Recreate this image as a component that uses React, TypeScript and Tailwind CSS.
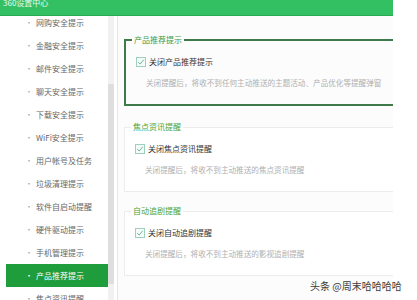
import React from "react";

const menu = [
  "网购安全提示",
  "金融安全提示",
  "邮件安全提示",
  "聊天安全提示",
  "下载安全提示",
  "WiFi安全提示",
  "用户帐号及任务",
  "垃圾清理提示",
  "软件自启动提醒",
  "硬件驱动提示",
  "手机管理提示",
  "产品推荐提示",
  "焦点资讯提醒",
];

type Panel = { title: string; label: string; desc: string; active?: boolean };

const panels: Panel[] = [
  {
    title: "产品推荐提示",
    label: "关闭产品推荐提示",
    desc: "关闭提醒后，将收不到任何主动推送的主题活动、产品优化等提醒弹窗",
    active: true,
  },
  {
    title: "焦点资讯提醒",
    label: "关闭焦点资讯提醒",
    desc: "关闭提醒后，将收不到主动推送的焦点资讯提醒",
  },
  {
    title: "自动追剧提醒",
    label: "关闭自动追剧提醒",
    desc: "关闭提醒后，将收不到主动推送的影视追剧提醒",
  },
];

const Check = () => (
  <span className="w-[10px] h-[10px] border border-[#9fd0bf] bg-[#f4fbf8] flex items-center justify-center shrink-0">
    <svg width="8" height="8" viewBox="0 0 8 8">
      <path d="M1.2 4.2 L3.2 6 L6.8 1.8" fill="none" stroke="#6fb7a0" strokeWidth="1" />
    </svg>
  </span>
);

export default function App() {
  return (
    <div
      className="w-[417px] h-[300px] bg-white overflow-hidden"
      style={{ fontFamily: '"Noto Sans CJK SC", "Noto Sans", sans-serif' }}
    >
      <div className="w-[393px] h-[300px] flex flex-col overflow-hidden">
        {/* title bar */}
        <div className="h-[17px] shrink-0 bg-[#33c063] border-b border-[#2aa955] px-[3px] text-[8px] leading-[8px] text-white/90 -mt-[1px]">
          360设置中心
        </div>

        <div className="flex flex-1 min-h-0">
          {/* sidebar */}
          <div className="w-[108px] shrink-0 bg-white overflow-hidden">
            <ul className="-mt-[5px] pl-[6px]">
              {menu.map((m, i) => {
                const on = m === "产品推荐提示";
                return (
                  <li
                    key={i}
                    className={`h-[23px] flex items-center text-[8px] ${
                      on ? "bg-[#1f9c3c] text-white" : "text-[#666]"
                    }`}
                  >
                    <span className={`w-[30px] pl-[19px] ${on ? "text-white" : "text-[#aaa]"}`}>·</span>
                    <span>{m}</span>
                  </li>
                );
              })}
            </ul>
          </div>

          {/* scrollbar */}
          <div className="w-[6px] shrink-0 bg-[#f1f1f1] flex flex-col">
            <div className="h-[68px]" />
            <div className="h-[200px] bg-[#dedede]" />
          </div>

          <div className="w-[3px] shrink-0 bg-white" />
          <div className="w-[1px] shrink-0 bg-[#e6e6e6]" />

          {/* content */}
          <div className="flex-1 bg-[#fcfcfc] pl-[6px] overflow-hidden">
            {panels.map((p, i) => (
              <fieldset
                key={i}
                className={`w-[290px] ${
                  p.active
                    ? "border-2 border-[#3f7a4b] mt-[18px] pb-[15px]"
                    : `border border-[#ececec] bg-white pb-[15px] ${i === 1 ? "mt-[15px]" : "mt-[13px]"}`
                }`}
              >
                <legend
                  className={`ml-[6px] px-[2px] text-[8px] leading-[12px] ${
                    p.active ? "text-[#3c9a3c]" : "text-[#4aa53a]"
                  }`}
                >
                  {p.title}
                </legend>
                <div className="pl-[10px] pt-[10px]">
                  <div className="h-[12px] flex items-center gap-[3px]">
                    <Check />
                    <span className="text-[8px] text-[#333]">{p.label}</span>
                  </div>
                  <div className="h-[12px] mt-[9px] pl-[10px] flex items-center text-[7.6px] text-[#b0b0b0]">
                    {p.desc}
                  </div>
                </div>
              </fieldset>
            ))}
          </div>
        </div>
      </div>

      {/* watermark */}
      <div className="-mt-[20px] pl-[310px] text-[10px] leading-[12px] text-[#3a3a3a]">
        头条 @周末哈哈哈哈
      </div>
    </div>
  );
}
